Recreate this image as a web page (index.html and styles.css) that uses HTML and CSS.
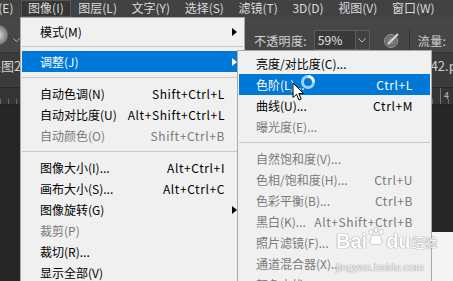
FILE: index.html
```html
<!DOCTYPE html>
<html>
<head>
    <title>图像 - 调整</title>
    <meta name="viewport" content="width=device-width, initial-scale=1.0">
    <link rel="stylesheet" href="styles.css">
</head>
<body>
    <div class="app">
        <div class="menubar">
            <span class="first">编辑(E)</span>
            <span class="active">图像(I)</span>
            <span>图层(L)</span>
            <span>文字(Y)</span>
            <span>选择(S)</span>
            <span>滤镜(T)</span>
            <span>3D(D)</span>
            <span>视图(V)</span>
            <span>窗口(W)</span>
        </div>

        <div class="options">
            <div class="brush"></div>
            <svg class="chev" width="7" height="5" viewBox="0 0 7 5"><polyline points="0.5,0.5 3.5,3.5 6.5,0.5" fill="none" stroke="#b5b5b5" stroke-width="1"/></svg>
            <span class="opt-label">不透明度:</span>
            <div class="field">
                <span class="field-value">59%</span>
                <span class="field-drop">
                    <svg width="8" height="5" viewBox="0 0 8 5"><polyline points="0.5,0.5 4,4 7.5,0.5" fill="none" stroke="#bdbdbd" stroke-width="1"/></svg>
                </span>
            </div>
            <svg class="airbrush" width="18" height="18" viewBox="0 0 18 18">
                <circle cx="8" cy="10" r="6.5" fill="#6a6a6a" stroke="#9a9a9a" stroke-width="1"/>
                <circle cx="8" cy="10" r="4" fill="#7d7d7d"/>
                <line x1="5" y1="13" x2="15" y2="3" stroke="#d8d8d8" stroke-width="2"/>
            </svg>
            <span class="divider"></span>
            <span class="opt-label flow">流量:</span>
            <div class="field small"></div>
        </div>

        <div class="tabs">
            <span class="tab-left">效果图20</span>
            <span class="tab-right">42.png</span>
        </div>

        <div class="ruler">
            <span class="ruler-mark">4</span>
        </div>

        <div class="canvas">
            <div class="doc"></div>
        </div>
    </div>

    <div class="menu main-menu">
        <div class="item">模式(M)<span class="arrow"></span></div>
        <div class="sep tight"></div>
        <div class="item hl">调整(J)<span class="arrow"></span></div>
        <div class="sep"></div>
        <div class="item">自动色调(N)<span class="key">Shift+Ctrl+L</span></div>
        <div class="item">自动对比度(U)<span class="key">Alt+Shift+Ctrl+L</span></div>
        <div class="item off">自动颜色(O)<span class="key">Shift+Ctrl+B</span></div>
        <div class="sep"></div>
        <div class="item">图像大小(I)...<span class="key">Alt+Ctrl+I</span></div>
        <div class="item">画布大小(S)...<span class="key">Alt+Ctrl+C</span></div>
        <div class="item">图像旋转(G)<span class="arrow"></span></div>
        <div class="item off">裁剪(P)</div>
        <div class="item">裁切(R)...</div>
        <div class="item">显示全部(V)</div>
    </div>

    <div class="menu sub-menu">
        <div class="item">亮度/对比度(C)...</div>
        <div class="item hl">色阶(L)...<span class="key">Ctrl+L</span></div>
        <div class="item">曲线(U)...<span class="key">Ctrl+M</span></div>
        <div class="item off">曝光度(E)...</div>
        <div class="sep"></div>
        <div class="item off">自然饱和度(V)...</div>
        <div class="item off">色相/饱和度(H)...<span class="key">Ctrl+U</span></div>
        <div class="item off">色彩平衡(B)...<span class="key">Ctrl+B</span></div>
        <div class="item off">黑白(K)...<span class="key">Alt+Shift+Ctrl+B</span></div>
        <div class="item off">照片滤镜(F)...</div>
        <div class="item off">通道混合器(X)...</div>
        <div class="item off">颜色查找...</div>
    </div>

    <svg class="busy" width="16" height="16" viewBox="0 0 16 16">
        <circle cx="8" cy="8" r="5.5" fill="none" stroke="#9fd0f5" stroke-width="3"/>
        <path d="M8 2.5 A5.5 5.5 0 0 1 13.5 8" fill="none" stroke="#e6f3fd" stroke-width="3"/>
    </svg>
    <svg class="pointer" width="13" height="20" viewBox="0 0 13 20">
        <path d="M1 1 L1 15.5 L4.5 12.3 L7 18 L9.2 17 L6.8 11.5 L11.5 11.5 Z" fill="#fff" stroke="#000" stroke-width="1" stroke-linejoin="round"/>
    </svg>

    <div class="watermark">
        <div class="wm-logo">
            <span>Bai</span>
            <svg width="18" height="19" viewBox="0 0 18 19">
                <ellipse cx="4" cy="5" rx="2" ry="2.6" fill="#fff" stroke="#bdbdbd" stroke-width="0.8"/>
                <ellipse cx="9" cy="3" rx="2" ry="2.6" fill="#fff" stroke="#bdbdbd" stroke-width="0.8"/>
                <ellipse cx="14" cy="5" rx="2" ry="2.6" fill="#fff" stroke="#bdbdbd" stroke-width="0.8"/>
                <path d="M3 15 C3 10 6 8 9 8 C12 8 15 10 15 15 C15 18 12 17.5 9 17.5 C6 17.5 3 18 3 15 Z" fill="#fff" stroke="#bdbdbd" stroke-width="0.8"/>
            </svg>
            <span>du</span>
            <span class="wm-cn">经验</span>
        </div>
        <div class="wm-url">jingyan.baidu.com</div>
    </div>
</body>
</html>
```

FILE: styles.css
```css
body {
    margin: 0;
    background: #282828;
    font-family: "Noto Sans CJK SC", "Noto Sans", sans-serif;
    font-size: 12px;
    overflow: hidden;
}

.app {
    width: 453px;
    height: 281px;
    display: flex;
    flex-direction: column;
}

/* top menu bar */
.menubar {
    height: 17px;
    flex-shrink: 0;
    display: flex;
    background: #424242;
    color: #dadada;
    white-space: nowrap;
    overflow: hidden;
}

.menubar span {
    padding: 0 7.3px;
    line-height: 16px;
}

.menubar .first {
    margin-left: -33px;
}

.menubar .active {
    background: #363636;
    box-shadow: inset 0 0 0 1px #555;
}

/* tool options bar */
.options {
    height: 36px;
    flex-shrink: 0;
    display: flex;
    align-items: center;
    padding-top: 11px;
    box-sizing: border-box;
    background: #464646;
    color: #d2d2d2;
    white-space: nowrap;
    border-bottom: 1px solid #333;
}

.brush {
    width: 20px;
    height: 20px;
    border-radius: 50%;
    margin-left: -12px;
    align-self: flex-start;
    margin-top: -3px;
    background: radial-gradient(circle at 50% 50%, #e8e8e8 0, #9a9a9a 45%, #4a4a4a 100%);
    flex-shrink: 0;
}

.chev {
    margin-left: 5px;
    flex-shrink: 0;
}

.opt-label {
    margin-left: 234px;
    font-size: 12px;
    letter-spacing: 0.3px;
}

.opt-label.flow {
    margin-left: 8px;
}

.field {
    display: flex;
    height: 20px;
    margin-left: 7px;
    border: 1px solid #5c5c5c;
    background: #393939;
    box-sizing: border-box;
    flex-shrink: 0;
}

.field-value {
    width: 40px;
    padding-left: 3px;
    line-height: 18px;
    color: #e4e4e4;
    box-sizing: border-box;
}

.field-drop {
    width: 13px;
    border-left: 1px solid #5c5c5c;
    display: flex;
    align-items: center;
    justify-content: center;
    background: #424242;
}

.field.small {
    width: 20px;
}

.airbrush {
    margin-left: 13px;
    flex-shrink: 0;
}

.divider {
    width: 1px;
    height: 22px;
    background: #333;
    margin-left: 8px;
    flex-shrink: 0;
}

/* document tabs */
.tabs {
    height: 34px;
    flex-shrink: 0;
    display: flex;
    justify-content: space-between;
    background: #3b3b3b;
    color: #cfcfcf;
    font-size: 13px;
    line-height: 16px;
    padding-top: 5px;
    box-sizing: border-box;
    white-space: nowrap;
    overflow: hidden;
}

.tab-left {
    margin-left: -25px;
}

.tab-right {
    margin-right: -19px;
}

/* ruler */
.ruler {
    height: 18px;
    flex-shrink: 0;
    background-color: #353535;
    background-image: repeating-linear-gradient(to right, #6a6a6a 0, #6a6a6a 1px, transparent 1px, transparent 8px);
    background-size: 100% 5px;
    background-position: 0 100%;
    background-repeat: no-repeat;
    border-top: 1px solid #2a2a2a;
    border-bottom: 1px solid #222;
    box-sizing: border-box;
    display: flex;
    font-size: 9px;
    color: #bbb;
}

.ruler-mark {
    margin-left: 440px;
    padding-left: 3px;
    border-left: 1px solid #777;
    line-height: 16px;
}

/* pasteboard */
.canvas {
    flex: 1;
    padding-top: 127px;
    box-sizing: border-box;
    background: #262626;
}

.doc {
    margin-left: 250px;
    height: 60px;
    background: #f4f4f4;
}

/* menus */
.menu {
    position: absolute;
    background: #f0f0f0;
    border: 1px solid #a9a9a9;
    color: #000;
    white-space: nowrap;
}

.main-menu {
    left: 20px;
    top: 17px;
    width: 221px;
    height: 290px;
    padding: 3px 1px;
}

.sub-menu {
    left: 237px;
    top: 50px;
    width: 191px;
    height: 260px;
    padding: 2px 1px;
}

.item {
    height: 21px;
    display: flex;
    align-items: center;
    padding: 0 18px;
}

.sub-menu .item {
    padding: 0 17px;
}

.item.hl {
    background: #0078d7;
    color: #fff;
}

.item.off {
    color: #7a7a7a;
}

.key {
    margin-left: auto;
    letter-spacing: 0.6px;
}

.arrow {
    margin-left: auto;
    margin-right: -12px;
    width: 0;
    height: 0;
    border-top: 4px solid transparent;
    border-bottom: 4px solid transparent;
    border-left: 5px solid #000;
}

.item.hl .arrow {
    border-left-color: #fff;
}

.sep {
    height: 1px;
    background: #c8c8c8;
    margin: 5px 0;
}

.sep.tight {
    margin: 4px 0;
}

/* mouse cursor with busy ring */
.pointer {
    position: absolute;
    left: 292px;
    top: 82px;
}

.busy {
    position: absolute;
    left: 300px;
    top: 74px;
}

/* watermark */
.watermark {
    position: absolute;
    left: 336px;
    top: 226px;
    color: #fff;
    text-shadow: 0 0 1px #8a8a8a, 0 0 1px #8a8a8a;
}

.wm-logo {
    display: flex;
    align-items: flex-end;
    font-family: "Liberation Sans", sans-serif;
    font-weight: bold;
    font-size: 20px;
    line-height: 22px;
    height: 26px;
}

.wm-logo svg {
    margin: 0 1px 6px 0;
}

.wm-cn {
    font-family: "Noto Sans CJK SC", sans-serif;
    font-size: 13px;
    font-weight: normal;
    margin-left: 1px;
    line-height: 20px;
}

.wm-url {
    font-family: "Liberation Sans", sans-serif;
    font-size: 10.5px;
    margin-top: 9px;
    letter-spacing: 0.2px;
}
```
